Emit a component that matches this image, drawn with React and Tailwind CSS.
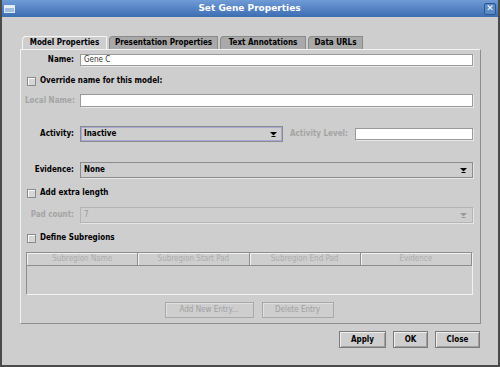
import React from 'react';

const font = "font-['DejaVu_Sans',sans-serif]";
const small = 'text-[8px] font-stretch-semi-condensed whitespace-nowrap';

function Check({ label }) {
  return (
    <div className="flex items-center h-[10px]">
      <div className="w-[9px] h-[9px] border border-[#8a8a8a] bg-[#d6d6d6] shadow-[inset_1px_1px_0_#fff]" />
      <span className={`ml-[4px] ${small} font-bold text-black`}>{label}</span>
    </div>
  );
}

function Field({ className = '', value = '' }) {
  return (
    <div className={`bg-white border border-[#9a9a9a] shadow-[1px_1px_0_#e8e8e8] flex items-center pl-[3px] ${small} text-[#333] ${className}`}>
      {value}
    </div>
  );
}

function Arrow({ color = '#000' }) {
  return (
    <svg width="7" height="5" viewBox="0 0 7 5">
      <polygon points="0,0 7,0 3.5,3.5" fill={color} />
      <rect x="1.5" y="4" width="4" height="1" fill={color} />
    </svg>
  );
}

function Combo({ value, className = '', disabled = false, focused = false }) {
  return (
    <div
      className={`flex items-center justify-between pl-[3px] pr-[5px] border ${small} ${
        disabled ? 'border-[#b4b4b4] text-[#9a9a9a] font-normal' : 'border-[#8c8c8c] text-black font-bold'
      } ${focused ? 'shadow-[inset_0_0_0_1px_#a8a8d8]' : 'shadow-[1px_1px_0_#e6e6e6]'} ${className}`}
    >
      <span>{value}</span>
      <Arrow color={disabled ? '#9a9a9a' : '#000'} />
    </div>
  );
}

function Btn({ label, className = '', disabled = false }) {
  return (
    <div
      className={`flex items-center justify-center border ${small} ${
        disabled
          ? 'border-[#a8a8a8] text-[#a0a0a0] font-normal shadow-[inset_1px_1px_0_#e0e0e0]'
          : 'border-[#7a7a7a] text-black font-bold shadow-[inset_1px_1px_0_#f0f0f0,inset_-1px_-1px_0_#a0a0a0]'
      } ${className}`}
    >
      {label}
    </div>
  );
}

export default function App() {
  const tabs = [
    { label: 'Model Properties', w: 'w-[85px]', active: true },
    { label: 'Presentation Properties', w: 'w-[109px]' },
    { label: 'Text Annotations', w: 'w-[86px]' },
    { label: 'Data URLs', w: 'w-[55px]' },
  ];
  const cols = ['Subregion Name', 'Subregion Start Pad', 'Subregion End Pad', 'Evidence'];

  return (
    <div className={`${font} w-[500px] h-[367px] bg-[#cecece] flex flex-col border-l-2 border-r-2 border-b-2 border-[#4a4a4a] overflow-hidden`}>
      {/* title bar */}
      <div className="h-[17px] shrink-0 bg-gradient-to-b from-[#6f9bd6] to-[#3d6db2] flex items-center px-[2px]">
        <div className="w-[11px] h-[8px] border border-[#dfe8f5] bg-[#9fbbe0] shadow-[inset_0_2px_0_#e8eef8]" />
        <div className="flex-1 text-center text-white text-[9px] font-bold">Set Gene Properties</div>
        <div className="w-[12px] h-[12px] border border-[#2d568f] rounded-[2px] bg-[#5b89c7] flex items-center justify-center text-white text-[9px] font-bold leading-none">
          ✕
        </div>
      </div>

      <div className="flex-1 flex flex-col pl-[18px] pr-[17px] pt-[19px]">
        {/* tabs */}
        <div className="flex items-end h-[13px] pl-[2px] gap-[2px]">
          {tabs.map((t) => (
            <div
              key={t.label}
              className={`${t.w} h-[13px] flex items-center justify-center ${small} font-bold text-black border border-b-0 rounded-tl-[4px] ${
                t.active ? 'bg-[#cecece] border-[#f4f4f4]' : 'bg-[#a9a9a9] border-[#8a8a8a]'
              }`}
            >
              {t.label}
            </div>
          ))}
        </div>

        {/* panel */}
        <div className="h-[275px] border border-t-[#f2f2f2] border-l-[#f2f2f2] border-r-[#8e8e8e] border-b-[#8e8e8e] pt-[3px] pl-[4px] pr-[7px] flex flex-col">
          <div className="flex items-center h-[13px]">
            <span className={`w-[49px] text-right ${small} font-bold`}>Name:</span>
            <Field className="ml-[6px] flex-1 h-[12px]" value="Gene C" />
          </div>

          <div className="mt-[10px] ml-[2px]">
            <Check label="Override name for this model:" />
          </div>

          <div className="flex items-center h-[13px] mt-[8px]">
            <span className={`w-[49px] text-right ${small} font-bold text-[#a4a4a4]`}>Local Name:</span>
            <Field className="ml-[6px] flex-1 h-[13px]" />
          </div>

          <div className="flex items-center h-[16px] mt-[19px]">
            <span className={`w-[49px] text-right ${small} font-bold`}>Activity:</span>
            <Combo value="Inactive" focused className="ml-[6px] w-[203px] h-[16px]" />
            <span className={`ml-[7px] ${small} font-bold text-[#a4a4a4]`}>Activity Level:</span>
            <Field className="ml-[7px] flex-1 h-[12px]" />
          </div>

          <div className="flex items-center h-[16px] mt-[20px]">
            <span className={`w-[49px] text-right ${small} font-bold`}>Evidence:</span>
            <Combo value="None" className="ml-[6px] flex-1 h-[16px]" />
          </div>

          <div className="mt-[10px] ml-[2px]">
            <Check label="Add extra length" />
          </div>

          <div className="flex items-center h-[16px] mt-[9px]">
            <span className={`w-[49px] text-right ${small} font-bold text-[#a4a4a4]`}>Pad count:</span>
            <Combo value="7" disabled className="ml-[6px] flex-1 h-[16px]" />
          </div>

          <div className="mt-[10px] ml-[2px]">
            <Check label="Define Subregions" />
          </div>

          {/* table */}
          <div className="mt-[9px] ml-[1px] h-[43px] border border-t-[#8e8e8e] border-l-[#8e8e8e] border-r-[#f2f2f2] border-b-[#f2f2f2] flex flex-col">
            <div className="grid grid-cols-4 h-[11px]">
              {cols.map((c) => (
                <div
                  key={c}
                  className={`flex items-center justify-center ${small} text-[#acacac] border-r border-b border-[#8e8e8e] shadow-[inset_1px_1px_0_#f2f2f2]`}
                >
                  {c}
                </div>
              ))}
            </div>
          </div>

          <div className="flex justify-center gap-[8px] mt-[7px]">
            <Btn label="Add New Entry..." disabled className="w-[89px] h-[16px]" />
            <Btn label="Delete Entry" disabled className="w-[72px] h-[16px]" />
          </div>
        </div>

        {/* bottom buttons */}
        <div className="flex justify-end gap-[7px] mt-[7px] pr-[1px]">
          <Btn label="Apply" className="w-[47px] h-[17px]" />
          <Btn label="OK" className="w-[35px] h-[17px]" />
          <Btn label="Close" className="w-[45px] h-[17px]" />
        </div>
      </div>
    </div>
  );
}
